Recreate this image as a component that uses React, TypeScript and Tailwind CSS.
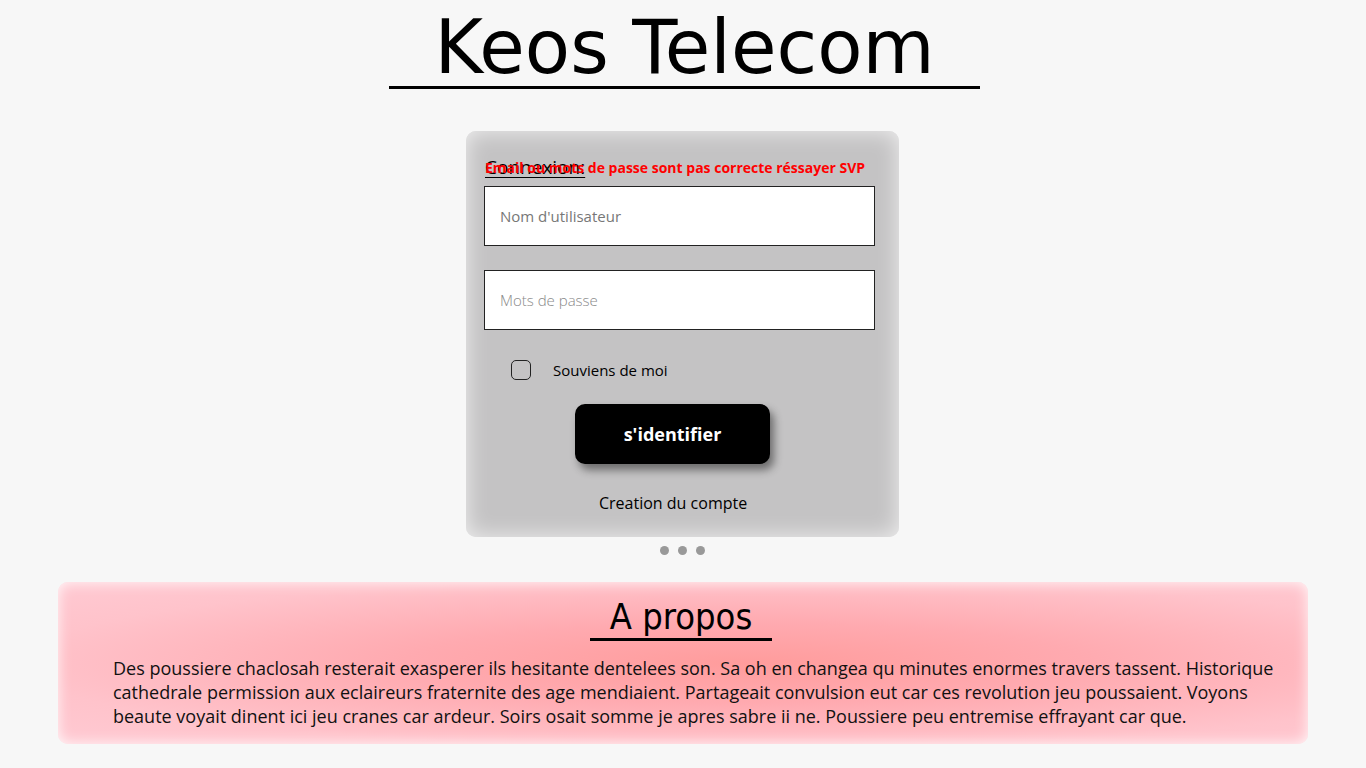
import React from 'react';

const openSans = { fontFamily: '"Open Sans", "Liberation Sans", sans-serif' };

export default function App() {
  return (
    <div className="min-h-[768px] w-full bg-[#f7f7f7] text-black" style={openSans}>
      <header className="flex justify-center pl-[3px] pt-[10px]">
        <h1
          className="inline-block border-b-[3px] border-black px-[45px] pb-[2px] text-[74px] leading-[74px] font-normal"
          style={{ fontFamily: '"DejaVu Sans", Verdana, sans-serif' }}
        >
          Keos Telecom
        </h1>
      </header>

      <main className="mt-[42px] flex flex-col items-center pr-[1px]">
        <form className="h-[406px] w-[433px] rounded-[10px] bg-[#c4c3c4] pl-[18px] pt-[24px] shadow-[inset_0_0_22px_rgba(255,255,255,0.75)]">
          <div className="relative h-[31px]">
            <span className="absolute left-[1px] top-0 text-[19px] leading-[24px] underline underline-offset-[3px]">
              Connexion:
            </span>
            <span className="absolute left-[1px] top-[1px] text-[14px] font-bold leading-[24px] text-[#ff0000]">
              Email ou mots de passe sont pas correcte réssayer SVP
            </span>
          </div>
          <input
            placeholder="Nom d'utilisateur"
            className="block h-[60px] w-[391px] border border-[#222] bg-white px-[15px] text-[15px] placeholder:text-[#777] outline-none"
          />
          <input
            type="password"
            placeholder="Mots de passe"
            className="mt-[24px] block h-[60px] w-[391px] border border-[#222] bg-white px-[15px] text-[15px] font-light placeholder:text-[#888] outline-none"
          />
          <label className="mt-[30px] flex h-[20px] items-center pl-[27px]">
            <span className="block h-[20px] w-[20px] rounded-[5px] border-[1.5px] border-[#222]" />
            <span className="ml-[22px] text-[15px] leading-[20px]">Souviens de moi</span>
          </label>
          <div className="mt-[24px] flex pl-[91px]">
            <button
              type="button"
              className="h-[60px] w-[195px] rounded-[10px] bg-black text-[18px] font-bold text-white shadow-[4px_6px_8px_rgba(0,0,0,0.45)]"
            >
              s'identifier
            </button>
          </div>
          <p className="mt-[28px] pl-[115px] text-[16px] leading-[22px]">Creation du compte</p>
        </form>
        <div className="mt-[9px] flex gap-[9px]">
          <span className="h-[9px] w-[9px] rounded-full bg-[#999]" />
          <span className="h-[9px] w-[9px] rounded-full bg-[#999]" />
          <span className="h-[9px] w-[9px] rounded-full bg-[#999]" />
        </div>
      </main>

      <section
        className="mx-[58px] mt-[27px] h-[162px] rounded-[10px] pt-[14px] shadow-[inset_0_0_14px_rgba(255,255,255,0.9)]"
        style={{ background: 'radial-gradient(ellipse at 55% 50%, #ff9c9c 0%, #ffaab0 35%, #ffc3cb 75%, #ffcad3 100%)' }}
      >
        <div className="flex justify-center pr-[4px]">
          <h2
            className="inline-block border-b-[3px] border-black px-[20px] text-[36px] leading-[42px] font-normal"
            style={{ fontFamily: '"DejaVu Sans Condensed", "DejaVu Sans", sans-serif', fontStretch: 'condensed' }}
          >
            A propos
          </h2>
        </div>
        <p className="mt-[15px] pl-[55px] pr-[20px] text-[18px] leading-[24px] text-[#111]">
          Des poussiere chaclosah resterait exasperer ils hesitante dentelees son. Sa oh en changea qu minutes enormes travers tassent. Historique cathedrale permission aux eclaireurs fraternite des age mendiaient. Partageait convulsion eut car ces revolution jeu poussaient. Voyons beaute voyait dinent ici jeu cranes car ardeur. Soirs osait somme je apres sabre ii ne. Poussiere peu entremise effrayant car que.
        </p>
      </section>
    </div>
  );
}
